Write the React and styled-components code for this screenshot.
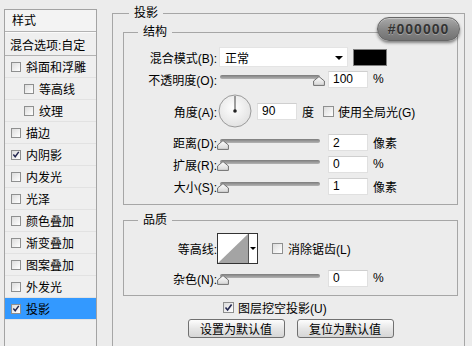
import React from "react";
import styled, { createGlobalStyle } from "styled-components";

const GlobalStyle = createGlobalStyle`
  html, body {
    margin: 0;
    padding: 0;
    background: #ececec;
  }
  body {
    font-family: "Liberation Sans", "Noto Sans CJK SC", sans-serif;
    font-size: 12px;
    color: #000;
  }
  * { box-sizing: border-box; }
`;

const Page = styled.div`
  position: relative;
  display: flex;
  align-items: flex-start;
  width: 472px;
  height: 346px;
  overflow: hidden;
  background: #ececec;
`;

/* ---------- left list of styles ---------- */

const StylePanel = styled.div`
  flex-shrink: 0;
  margin: 9px 0 0 4px;
  width: 93px;
  height: 345px;
  border: 1px solid #a3a3a3;
  background: #efefef;
`;

const PanelHeader = styled.div`
  height: 22px;
  padding: 0 0 3px 7px;
  display: flex;
  align-items: center;
  background: #f3f3f3;
  border-bottom: 1px solid #b2b2b2;
`;

const BlendRow = styled.div`
  height: 24px;
  padding-left: 5px;
  display: flex;
  align-items: center;
  border-top: 1px solid #fafafa;
  border-bottom: 1px solid #b2b2b2;
  white-space: nowrap;
`;

const LayerRow = styled.div`
  height: 22px;
  padding-left: ${(p) => (p.$indent ? 19 : 6)}px;
  display: flex;
  align-items: center;
  gap: 5px;
  border-bottom: 1px solid #e2e2e2;
  background: ${(p) => (p.$selected ? "#3399ff" : "transparent")};
  white-space: nowrap;
`;

const Box = styled.span`
  flex-shrink: 0;
  display: inline-flex;
  align-items: center;
  justify-content: center;
  width: ${(p) => p.$size || 11}px;
  height: ${(p) => p.$size || 11}px;
  margin-left: ${(p) => p.$ml || 0}px;
  border: 1px solid #8e8f8f;
  background: linear-gradient(135deg, #dcdcdc, #ffffff);
`;

function Check({ checked, size, ml }) {
  return (
    <Box $size={size} $ml={ml}>
      {checked && (
        <svg width="9" height="9" viewBox="0 0 9 9">
          <path d="M1.5 4.5 L3.6 7 L7.6 1.5" fill="none" stroke="#22264f" strokeWidth="1.6" />
        </svg>
      )}
    </Box>
  );
}

/* ---------- right side groups ---------- */

const Main = styled.div`
  position: relative;
  flex-shrink: 0;
  margin: 13px 0 0 15px;
  width: 353px;
  height: 345px;
  border: 1px solid #a6a6a6;
  padding: 18px 6px 0 10px;
`;

const Group = styled.div`
  position: relative;
  border: 1px solid #a6a6a6;
  margin-top: ${(p) => p.$mt || 0}px;
  padding: ${(p) => p.$pad};
`;

const Legend = styled.span`
  position: absolute;
  top: -8px;
  left: ${(p) => p.$left || 14}px;
  padding: 0 5px;
  line-height: 14px;
  background: #ececec;
`;

const Row = styled.div`
  display: flex;
  align-items: center;
  height: ${(p) => p.$h}px;
  margin-top: ${(p) => p.$mt || 0}px;
  white-space: nowrap;
`;

const Label = styled.span`
  flex-shrink: 0;
  width: 93px;
  text-align: right;
`;

const Text = styled.span`
  margin-left: ${(p) => p.$ml || 0}px;
`;

const Select = styled.div`
  position: relative;
  margin-left: 2px;
  width: 129px;
  height: 20px;
  padding-left: 5px;
  display: flex;
  align-items: center;
  background: #fff;
  border: 1px solid #e4e4e4;
  &::after {
    content: "";
    position: absolute;
    right: 4px;
    top: 8px;
    border-left: 4px solid transparent;
    border-right: 4px solid transparent;
    border-top: 4px solid #000;
  }
`;

const Swatch = styled.div`
  margin-left: 5px;
  width: 34px;
  height: 17px;
  background: #000;
  border: 1px solid #808080;
`;

const SliderWrap = styled.div`
  position: relative;
  margin-left: 3px;
  width: 100px;
  height: 14px;
`;

const Track = styled.div`
  position: absolute;
  left: 0;
  right: 0;
  top: 3px;
  height: 4px;
  border-radius: 2px;
  background: linear-gradient(#7c7c7c, #b4b4b4);
`;

const Thumb = styled.svg`
  position: absolute;
  top: 4px;
`;

function Slider({ value }) {
  return (
    <SliderWrap>
      <Track />
      <Thumb width="12" height="10" viewBox="0 0 12 10" style={{ left: `${(value / 100) * 96 - 3}px` }}>
        <defs>
          <linearGradient id="tg" x1="0" y1="0" x2="0" y2="1">
            <stop offset="0" stopColor="#ffffff" />
            <stop offset="1" stopColor="#d6d6d6" />
          </linearGradient>
        </defs>
        <path d="M6 0.6 L11.4 5 L11.4 9.4 L0.6 9.4 L0.6 5 Z" fill="url(#tg)" stroke="#6f6f6f" strokeWidth="1" />
      </Thumb>
    </SliderWrap>
  );
}

const Field = styled.input`
  margin-left: ${(p) => p.$ml || 8}px;
  width: 40px;
  height: 17px;
  padding: 0 4px;
  border: 1px solid #e0e0e0;
  border-top-color: #cfcfcf;
  background: #fff;
  font-family: "Liberation Sans", sans-serif;
  font-size: 12px;
  color: #000;
  outline: none;
`;

const Dial = styled.svg`
  margin-left: 1px;
  flex-shrink: 0;
`;

const Contour = styled.div`
  display: flex;
  width: 41px;
  height: 31px;
  border: 1px solid #333;
  background: #fff;
`;

const ContourArrow = styled.div`
  flex: 1;
  display: flex;
  align-items: center;
  justify-content: center;
  border-left: 1px solid #555;
  &::after {
    content: "";
    border-left: 3px solid transparent;
    border-right: 3px solid transparent;
    border-top: 3px solid #000;
  }
`;

const KnockRow = styled.div`
  display: flex;
  align-items: center;
  height: 22px;
  padding-left: 100px;
  white-space: nowrap;
`;

const Buttons = styled.div`
  display: flex;
  justify-content: center;
  gap: 12px;
  margin-top: 1px;
`;

const Button = styled.button`
  width: 97px;
  height: 19px;
  padding: 0;
  border: 1px solid #707070;
  border-radius: 3px;
  background: linear-gradient(#fdfdfd, #e6e6e6 50%, #d6d6d6);
  font-family: "Liberation Sans", "Noto Sans CJK SC", sans-serif;
  font-size: 12px;
  color: #000;
`;

const ColorBadge = styled.div`
  position: absolute;
  left: 377px;
  top: 17px;
  width: 83px;
  height: 24px;
  border-radius: 12px;
  border: 1px solid #666;
  background: linear-gradient(#a9a9a9, #858585 55%, #727272);
  box-shadow: 0 2px 3px rgba(0, 0, 0, 0.45), inset 0 1px 0 rgba(255, 255, 255, 0.35);
  display: flex;
  align-items: center;
  justify-content: center;
  font-family: "Liberation Sans", sans-serif;
  font-weight: bold;
  font-size: 14px;
  letter-spacing: 1px;
  color: #333;
  text-shadow: 0 1px 0 rgba(255, 255, 255, 0.3);
`;

const layers = [
  { name: "斜面和浮雕" },
  { name: "等高线", indent: true },
  { name: "纹理", indent: true },
  { name: "描边" },
  { name: "内阴影", checked: true },
  { name: "内发光" },
  { name: "光泽" },
  { name: "颜色叠加" },
  { name: "渐变叠加" },
  { name: "图案叠加" },
  { name: "外发光" },
  { name: "投影", checked: true, selected: true },
];

const sliders = [
  { label: "距离(D):", value: 2, pos: 0, unit: "像素", h: 21 },
  { label: "扩展(R):", value: 0, pos: 0, unit: "%", h: 22 },
  { label: "大小(S):", value: 1, pos: 0, unit: "像素", h: 22 },
];

export default function App() {
  return (
    <Page>
      <GlobalStyle />
      <StylePanel>
        <PanelHeader>样式</PanelHeader>
        <BlendRow>混合选项:自定</BlendRow>
        {layers.map((l) => (
          <LayerRow key={l.name} $indent={l.indent} $selected={l.selected}>
            <Check checked={l.checked} size={10} />
            <span>{l.name}</span>
          </LayerRow>
        ))}
      </StylePanel>

      <Main>
        <Legend $left={16}>投影</Legend>

        <Group $pad="13px 0 7px 0">
          <Legend>结构</Legend>
          <Row $h={22}>
            <Label>混合模式(B):</Label>
            <Select>正常</Select>
            <Swatch />
          </Row>
          <Row $h={22}>
            <Label>不透明度(O):</Label>
            <Slider value={100} />
            <Field readOnly value="100" />
            <Text $ml={5}>%</Text>
          </Row>
          <Row $h={42}>
            <Label>角度(A):</Label>
            <Dial width="34" height="34" viewBox="0 0 34 34">
              <defs>
                <radialGradient id="dg" cx="0.45" cy="0.4" r="0.6">
                  <stop offset="0" stopColor="#ffffff" />
                  <stop offset="1" stopColor="#e2e2e2" />
                </radialGradient>
              </defs>
              <circle cx="17" cy="17" r="16" fill="url(#dg)" stroke="#9a9a9a" />
              <line x1="17" y1="17" x2="17" y2="2" stroke="#444" strokeWidth="1" />
              <circle cx="17" cy="17" r="1.8" fill="#222" />
            </Dial>
            <Field readOnly value="90" $ml={5} />
            <Text $ml={5}>度</Text>
            <Check ml={9} />
            <Text $ml={4}>使用全局光(G)</Text>
          </Row>
          {sliders.map((s) => (
            <Row key={s.label} $h={s.h}>
              <Label>{s.label}</Label>
              <Slider value={s.pos} />
              <Field readOnly value={s.value} />
              <Text $ml={5}>{s.unit}</Text>
            </Row>
          ))}
        </Group>

        <Group $mt={15} $pad="12px 0 6px 0">
          <Legend>品质</Legend>
          <Row $h={30}>
            <Label>等高线:</Label>
            <Contour>
              <svg width="30" height="29" viewBox="0 0 30 29">
                <polygon points="0,29 30,0 30,29" fill="#a4a4a4" />
              </svg>
              <ContourArrow />
            </Contour>
            <Check ml={14} />
            <Text $ml={5}>消除锯齿(L)</Text>
          </Row>
          <Row $h={22} $mt={4}>
            <Label>杂色(N):</Label>
            <Slider value={0} />
            <Field readOnly value="0" />
            <Text $ml={5}>%</Text>
          </Row>
        </Group>

        <KnockRow>
          <Check checked />
          <Text $ml={4}>图层挖空投影(U)</Text>
        </KnockRow>
        <Buttons>
          <Button>设置为默认值</Button>
          <Button>复位为默认值</Button>
        </Buttons>
      </Main>

      <ColorBadge>#000000</ColorBadge>
    </Page>
  );
}
